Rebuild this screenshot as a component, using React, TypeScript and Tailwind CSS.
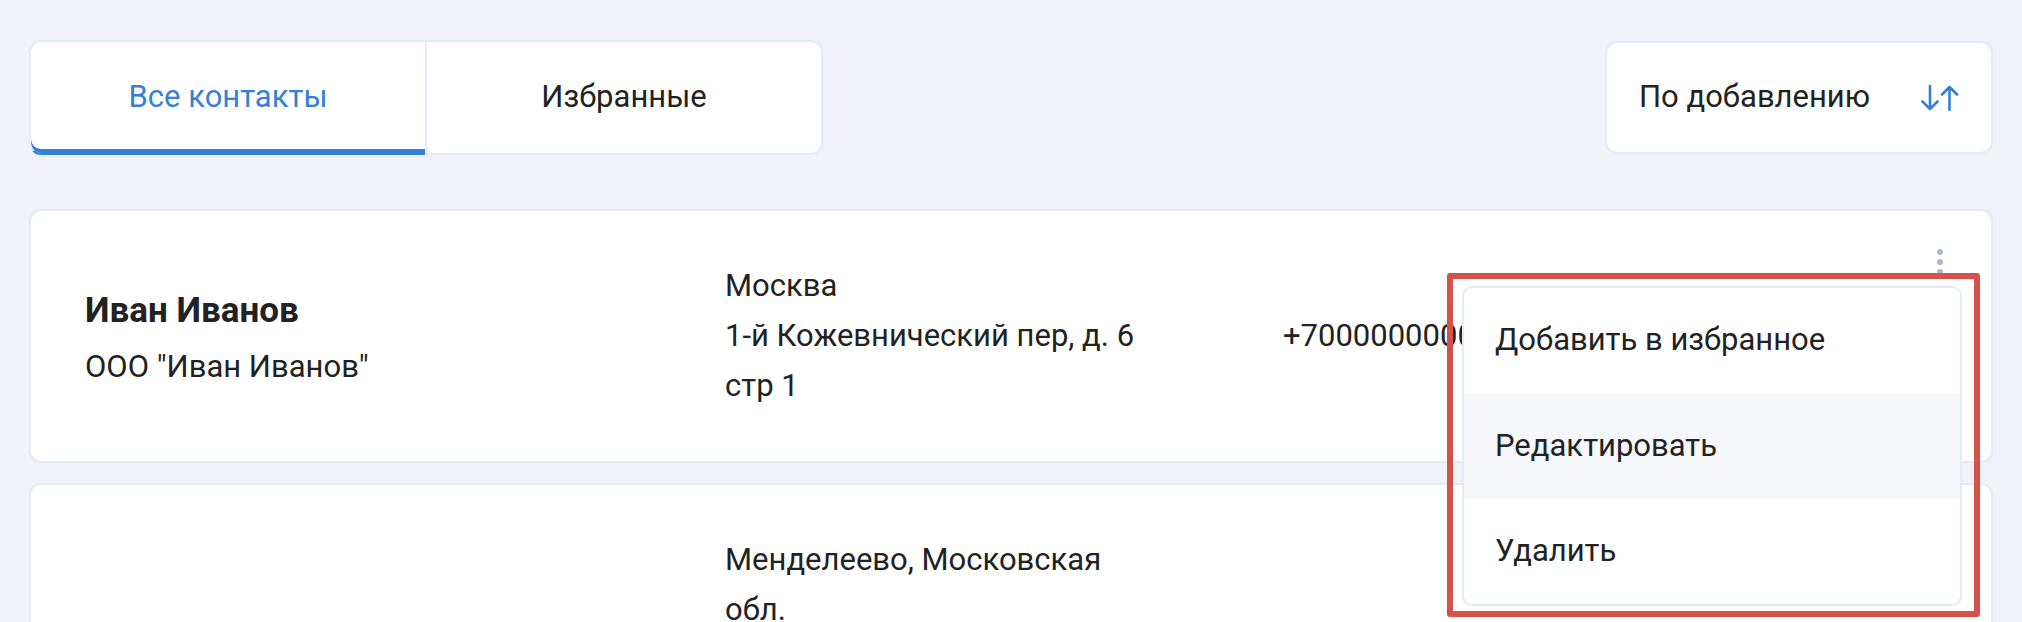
const contacts = [
  {
    name: 'Иван Иванов',
    company: 'ООО "Иван Иванов"',
    city: 'Москва',
    street: ['1-й Кожевнический пер, д. 6 стр 1'],
    phone: '+70000000000',
  },
  {
    name: 'Пётр Петров',
    company: 'ИП "Петров"',
    city: 'Менделеево, Московская обл.',
    street: ['Солнечногорский район', 'ул. Центральная, д. 12', 'корп. 3, подъезд 2', 'этаж 5, кв. 45'],
    phone: '+70000000001',
  },
];

const SortIcon = () => (
  <svg width="38" height="26" viewBox="0 0 38 26" fill="none" stroke="#3580d4" strokeWidth="2.6" strokeLinecap="round" strokeLinejoin="round">
    <path d="M9 1v23M1.5 16.5L9 24l7.5-7.5" />
    <path d="M28.5 25V2M21 9.5L28.5 2 36 9.5" />
  </svg>
);

const ContactCard = ({ c }: { c: (typeof contacts)[number] }) => (
  <div className="flex shrink-0 items-center rounded-[12px] border-2 border-[#e3eaf8] bg-white py-[50px] pl-[54px] pr-[48px]">
    <div className="mt-[6px] w-[640px] shrink-0">
      <div className="text-[35px] font-bold leading-[40px] text-[#222]">{c.name}</div>
      <div className="mt-[16px] text-[31px] leading-[40px] text-[#222]">{c.company}</div>
    </div>
    <div className="w-[558px] shrink-0 text-[31px] leading-[50px] text-[#222]">
      <div className="max-w-[420px]">
        <div>{c.city}</div>
        {c.street.map((s) => (
          <div key={s}>{s}</div>
        ))}
      </div>
    </div>
    <div className="flex-1 text-[31px] leading-[50px] text-[#222]">{c.phone}</div>
    <div className="-mt-[12px] flex flex-col gap-[4px] self-start">
      <span className="h-[6px] w-[6px] rounded-full bg-[#a9b8cf]" />
      <span className="h-[6px] w-[6px] rounded-full bg-[#a9b8cf]" />
      <span className="h-[6px] w-[6px] rounded-full bg-[#a9b8cf]" />
    </div>
  </div>
);

export default function App() {
  return (
    <div className="relative h-[622px] overflow-hidden bg-[#f0f2f7] px-[29px] pt-[40px]" style={{ fontFamily: 'Roboto, "Noto Sans", sans-serif' }}>
      <div className="flex items-start justify-between">
        <div className="flex h-[115px] w-[794px]">
          <button className="flex-1 rounded-l-[12px] border-y-2 border-l-2 border-[#e3eaf8] border-b-[#3580d4] bg-white text-[31px] text-[#3580d4] shadow-[inset_0_-4px_0_#3580d4]">
            Все контакты
          </button>
          <button className="flex-1 rounded-r-[12px] border-2 border-[#e3eaf8] bg-white text-[31px] text-[#222]">
            Избранные
          </button>
        </div>
        <button className="mt-[1px] flex h-[113px] w-[388px] items-center justify-between rounded-[12px] border-2 border-[#e3eaf8] bg-white px-[32px] text-[31px] text-[#222]">
          <span>По добавлению</span>
          <SortIcon />
        </button>
      </div>

      <div className="mt-[54px] flex flex-col gap-[20px]">
        {contacts.map((c) => (
          <ContactCard key={c.phone} c={c} />
        ))}
      </div>

      {/* highlighted dropdown */}
      <div className="absolute left-[1447px] top-[273px] h-[344px] w-[533px] rounded-[3px] border-[6px] border-[#d4524a]" />
      <div className="absolute left-[1462px] top-[286px] w-[500px] overflow-hidden rounded-[10px] border-2 border-[#e3eaf8] bg-white text-[31px] text-[#222]">
        <div className="flex h-[105px] items-center pl-[31px]">Добавить в избранное</div>
        <div className="flex h-[106px] items-center bg-[#f5f7fb] pl-[31px]">Редактировать</div>
        <div className="flex h-[105px] items-center pl-[31px]">Удалить</div>
      </div>
    </div>
  );
}
